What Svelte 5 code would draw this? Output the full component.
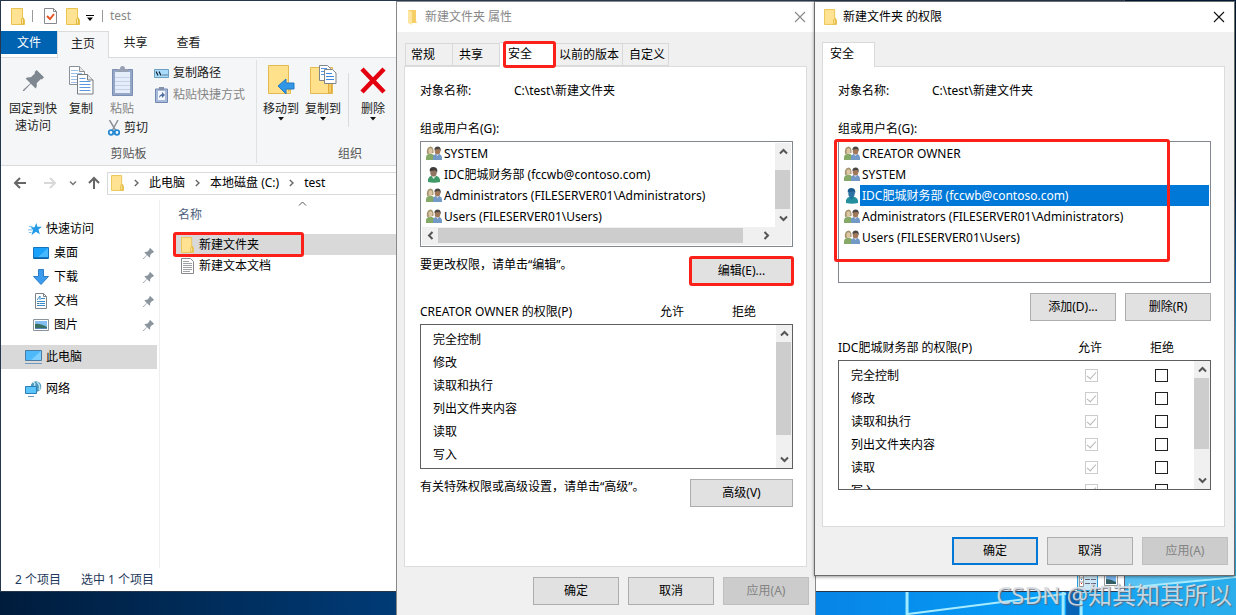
<script>
  const tabs = ['常规', '共享', '安全', '以前的版本', '自定义'];
  const quick = [
    { name: '桌面', icon: 'desktop' },
    { name: '下载', icon: 'download' },
    { name: '文档', icon: 'document' },
    { name: '图片', icon: 'picture' }
  ];
  const principals = [
    { name: 'SYSTEM', kind: 'group' },
    { name: 'IDC肥城财务部 (fccwb@contoso.com)', kind: 'user' },
    { name: 'Administrators (FILESERVER01\\Administrators)', kind: 'group' },
    { name: 'Users (FILESERVER01\\Users)', kind: 'group' }
  ];
  const allPrincipals = [{ name: 'CREATOR OWNER', kind: 'group' }, ...principals];
  const rights = ['完全控制', '修改', '读取和执行', '列出文件夹内容', '读取', '写入'];
</script>

{#snippet folder(w, h)}
  <svg width={w} height={h} viewBox="0 0 14 17" aria-hidden="true">
    <path d="M.5.5h11v11.5l2-.5v5H.5z" fill="#ffe392" stroke="#e9c350" />
    <path d="M10.500 16V11l2-1v6z" fill="#ffe9a8" stroke="#e3b93f" />
  </svg>
{/snippet}

{#snippet smallFolder()}
  <svg width="13" height="16" viewBox="0 0 13 16" aria-hidden="true">
    <path d="M2 1h8v11l1 2H5z" fill="#f6cf68" />
    <path d="M2 1l4 2v13l-4-2z" fill="#ffe6a0" />
  </svg>
{/snippet}

{#snippet pin(size, rough)}
  <svg width={size} height={size} viewBox="0 0 20 20" aria-hidden="true">
    <path d="M13 0l7 7-2 2-1-.5-4 4c.5 2 0 4-1 5L7.500 13 1 20H0v-1l7-6.500L2.500 8c1.500-1 3-1.500 5-1l4-4-.5-1z" fill={rough} />
  </svg>
{/snippet}

{#snippet pages()}
  <svg width="25" height="29" viewBox="0 0 25 29" aria-hidden="true">
    <path d="M.5.5h10l5 5v13H.5z" fill="#fff" stroke="#8b9096" />
    <path d="M10.500 .5v5h5" fill="#e8e8e8" stroke="#8b9096" />
    <path d="M2 4.500h7M2 7.500h11M2 10.500h11M2 13.500h11M2 16.500h11" stroke="#9cc0ea" />
    <path d="M8.500 8.500h10l5.500 5.500v14H8.500z" fill="#fff" stroke="#777c82" />
    <path d="M18.500 8.500v5.500h5.500" fill="#e8e8e8" stroke="#777c82" />
    <path d="M10.500 12.500h6M10.500 15.500h11M10.500 18.500h11M10.500 21.500h11M10.500 24.500h11" stroke="#5c98e0" />
  </svg>
{/snippet}

{#snippet chevron(dir, color = '#555')}
  <svg class={dir} width="9" height="7" viewBox="0 0 9 7" aria-hidden="true">
    <path d="M1 5.500l3.500-3.500L8 5.500" fill="none" stroke={color} stroke-width={dir === 'thin' ? 1 : 2} />
  </svg>
{/snippet}

{#snippet crumb()}
  <svg width="5" height="8" viewBox="0 0 5 8" aria-hidden="true">
    <path d="M.8 1L4 4 .8 7" fill="none" stroke="#666" stroke-width="1.400" />
  </svg>
{/snippet}

{#snippet drop()}
  <svg width="6" height="4" viewBox="0 0 6 4" aria-hidden="true"><path d="M0 0h6L3 3.500z" fill="#111" /></svg>
{/snippet}

{#snippet person(kind, selected)}
  {#if kind === 'group'}
    <svg width="16" height="15" viewBox="0 0 16 15" aria-hidden="true">
      <path d="M0 14V11q0-2 2.500-3h3.500Q9 9 9 11v3z" fill="#86a968" />
      <path d="M1 8Q0 1 4.500.5 8 1 7.500 7z" fill="#a4946c" />
      <ellipse cx="4.500" cy="5" rx="2" ry="2.800" fill="#dcc6a4" />
      <path d="M7 14V11q0-2 2.500-3h4Q16 9 16 11.500V14z" fill="#7399c6" />
      <path d="M10 8l1.500 2L13 8z" fill="#eef" />
      <ellipse cx="11.500" cy="5" rx="2.800" ry="3.500" fill="#a0785a" />
      <path d="M8.500 4Q8 .5 12 .5q3.500.5 2.500 5l-1-2.500q-3 0-5 1z" fill="#4a4644" />
    </svg>
  {:else}
    <svg width="16" height="16" viewBox="0 0 16 16" aria-hidden="true">
      <path d="M2 15v-3q1-3 4-3.500h3q4 .5 5 4V15q-6 1.500-12 0z" fill={selected ? '#24909e' : '#3f9967'} />
      <path d="M5.500 9l2 3L10 9z" fill={selected ? '#177a9e' : '#e8efe4'} />
      <ellipse cx="7.500" cy="5.500" rx="3.200" ry="4" fill={selected ? '#2c72a3' : '#8f7460'} />
      <path d="M3.800 4.500Q3 0 7.500 0q5 .3 3.500 6L10 3.500Q6 3 3.800 4.500z" fill={selected ? '#1b5b8d' : '#3f3b3a'} />
    </svg>
  {/if}
{/snippet}

{#snippet vscroll(grow, rest)}
  <div class="vscroll">
    <span class="cap">{@render chevron('up')}</span>
    <span class="thumb" style="flex-grow:{grow}"></span>
    <span style="flex-grow:{rest}"></span>
    <span class="cap">{@render chevron('down')}</span>
  </div>
{/snippet}

{#snippet titlebar(text, muted)}
  <header class="title" class:muted>
    {#if muted}{@render smallFolder()}{:else}{@render folder(13, 16)}{/if}
    <h2>{text}</h2>
    <button class="close" aria-label="关闭">
      <svg width="12" height="12" viewBox="0 0 12 12"><path d="M1 1l10 10M11 1L1 11" fill="none" stroke={muted ? '#888' : '#111'} stroke-width="1.100" /></svg>
    </button>
  </header>
{/snippet}

{#snippet objectName()}
  <dl class="object"><dt>对象名称:</dt><dd>C:\test\新建文件夹</dd></dl>
  <h3>组或用户名(G):</h3>
{/snippet}

{#snippet permHead(text)}
  <div class="permhead"><span>{text}</span><span>允许</span><span>拒绝</span></div>
{/snippet}

<main class="desktop">
  <div class="edge"></div>
  <svg class="wallpaper" viewBox="0 0 420 40" preserveAspectRatio="none" aria-hidden="true">
    <defs>
      <linearGradient id="sky"><stop offset="0" stop-color="#0784e6" /><stop offset=".55" stop-color="#079ff8" /><stop offset="1" stop-color="#2caeeb" /></linearGradient>
    </defs>
    <rect width="420" height="40" fill="url(#sky)" />
    <path d="M310 0h110L280 18z" fill="#7bd0f5" opacity=".65" />
    <path d="M92 39L248 19l172-17" fill="none" stroke="#a9ecff" stroke-width="2" />
    <path d="M91 12v28M247 12v28M265 15v25" stroke="#9eeaff" stroke-width="3" />
    <path d="M250 14h13v26h-13z" fill="#0864b7" />
  </svg>

  <section class="explorer" aria-label="test">
    <header class="quickbar">
      {@render folder(14, 17)}
      <i></i>
      <svg class="check" width="13" height="16" viewBox="0 0 13 16" aria-hidden="true"><path d="M.5.5h9l3 3v12H.5z" fill="#fff" stroke="#85898e" /><path d="M9.500.5v3h3" fill="none" stroke="#85898e" /><path d="M3 8l3 3 4-5" fill="none" stroke="#e65425" stroke-width="2" /></svg>
      {@render folder(14, 17)}
      <svg class="more" width="8" height="6" viewBox="0 0 8 6" aria-hidden="true"><path d="M0 0h8v1H0zM1 2.500h6L4 6z" /></svg>
      <i></i>
      <span>test</span>
    </header>
    <nav class="ribbontabs">
      <button class="file">文件</button>
      <button class="on">主页</button>
      <button>共享</button>
      <button>查看</button>
    </nav>
    <div class="ribbon">
      <div class="group clipboard">
        <button class="tool pinbtn">{@render pin(21, '#7f8790')}<span>固定到快<br />速访问</span></button>
        <button class="tool copy">{@render pages()}<span>复制</span></button>
        <div class="pastecol">
          <button class="tool off">
            <svg width="21" height="30" viewBox="0 0 21 30" aria-hidden="true"><path d="M.5 3.500h20v26H.5z" fill="#96a6c6" stroke="#7a8db3" /><path d="M3 6h15v21H3z" fill="#e6edfa" /><path d="M3 11.500h15M3 15.500h15M3 19.500h15M3 23.500h15" stroke="#c6d2ea" /><path d="M5 6V3h3q0-3 2.500-3T13 3h3v3z" fill="#97a1b3" /></svg>
            <span>粘贴</span>
          </button>
          <button class="small cut">
            <svg width="12" height="16" viewBox="0 0 12 16" aria-hidden="true"><path d="M1.500 0L8 11M10 0L4 11" fill="none" stroke="#8c9298" stroke-width="1.500" /><circle cx="3" cy="12.500" r="2.300" fill="none" stroke="#2388d4" stroke-width="1.800" /><circle cx="9" cy="12.500" r="2.300" fill="none" stroke="#2388d4" stroke-width="1.800" /></svg>
            剪切
          </button>
        </div>
        <div class="pathcol">
          <button class="small">
            <svg width="15" height="9" viewBox="0 0 15 9" aria-hidden="true"><path d="M.5.5h14v8H.5z" fill="#a9dcfb" stroke="#6f9fc0" /><path d="M2 2.500l2 4M5 2.500l2 4" stroke="#123" stroke-width="1.200" /><path d="M8.500 6h1M10.500 6h1M12.500 6h1" stroke="#123" /></svg>
            复制路径
          </button>
          <button class="small off">
            <svg width="15" height="16" viewBox="0 0 15 16" aria-hidden="true"><path d="M1.500 2h12v13.500h-12z" fill="#a8b9d9" stroke="#7187b0" /><path d="M4 4h7v9H4z" fill="#f2f6fd" /><path d="M5 0h5v3H5z" fill="#8491a8" /><path d="M5 11q0-3 3-4V5l3 3-3 3V9q-2 0-3 2z" fill="#526d9f" /></svg>
            粘贴快捷方式
          </button>
        </div>
        <p>剪贴板</p>
      </div>
      <div class="group organize">
        <button class="tool">
          <svg width="27" height="31" viewBox="0 0 27 31" aria-hidden="true"><path d="M.5.5h20v26l2-3v5H.5z" fill="#ffe18b" stroke="#e4b951" /><path d="M26 18v6h-8v5l-8-8 8-7v4z" fill="#3397e8" stroke="#2478c2" /></svg>
          <span>移动到</span>{@render drop()}
        </button>
        <button class="tool">
          <svg width="27" height="31" viewBox="0 0 27 31" aria-hidden="true"><path d="M.5 2.500h22v26H.5z" fill="#ffe18b" stroke="#e4b951" /><path d="M18.500 28V19l3-2v11z" fill="#f3cc68" stroke="#e0ad3c" /><path d="M9.500.5h8l3 3v12h-11z" fill="#fff" stroke="#7f858b" /><path d="M11 3.500h6M11 6.500h6M11 9.500h6" stroke="#5698e3" /><path d="M14.500 4.500h8l3.500 3.500v10.500H14.500z" fill="#fff" stroke="#7f858b" /><path d="M16 8.500h6M16 11.500h8M16 14.500h8" stroke="#3f86e0" /></svg>
          <span>复制到</span>{@render drop()}
        </button>
        <i></i>
        <button class="tool">
          <svg width="26" height="31" viewBox="0 0 26 31" aria-hidden="true"><path d="M2 4l22 23M24 4L2 27" fill="none" stroke="#e3000f" stroke-width="4.500" /></svg>
          <span>删除</span>{@render drop()}
        </button>
        <p>组织</p>
      </div>
    </div>
    <div class="navrow">
      <svg width="88" height="16" viewBox="0 0 88 16" aria-hidden="true">
        <g fill="none" stroke-width="2"><path d="M13 8H2M7 3L2 8l5 5" stroke="#666" /><path d="M31 8h11M37 3l5 5-5 5" stroke="#d8d8d8" /><path d="M57 6.500l3 3 3-3" stroke="#777" stroke-width="1.500" /><path d="M81 14V3M76 8l5-5 5 5" stroke="#666" /></g>
      </svg>
      <div class="address">
        {@render folder(13, 16)}{@render crumb()}<a href="#pc">此电脑</a>{@render crumb()}<a href="#c">本地磁盘 (C:)</a>{@render crumb()}<a href="#test">test</a>
      </div>
    </div>
    <div class="body">
      <nav class="tree">
        <a class="root quick" href="#quick"><svg width="14" height="14" viewBox="0 0 16 14" aria-hidden="true"><path d="M9.500 0l1.300 4.300H16l-4 3.200 1.500 5.500-4.500-3-5 4 1.700-6L3 5h4.500z" fill="#239ae8" /><path d="M1 4h4M0 8h5M1 11h3" stroke="#5ab6ef" /></svg>快速访问</a>
        {#each quick as q}
          <a class="leaf" href="#{q.icon}">
            <svg width="16" height="16" viewBox="0 0 16 16" aria-hidden="true">
              {#if q.icon === 'desktop'}
                <path d="M.5 2.500h15v11H.5z" fill="#18a0fa" stroke="#1474bd" /><path d="M1 13h14" stroke="#064a83" /><path d="M15 3L5 12h10z" fill="#45b8ff" />
              {:else if q.icon === 'download'}
                <path d="M5.500.5h5v7h5L8 15.500.5 7.500h5z" fill="#3b9bec" stroke="#2d7ec8" />
              {:else if q.icon === 'document'}
                <path d="M2.500.5h8l3 3v12h-11z" fill="#fff" stroke="#7d848b" /><path d="M10.500.5v3h3" fill="none" stroke="#7d848b" /><path d="M4 7l3-4v4M8 5.500h4M4 8.500h8M7 10.500h5M4 12.500h8" fill="none" stroke="#3a8ac9" /><path d="M4 10h2.500v1H4z" fill="#478" />
              {:else}
                <path d="M.5 2.500h15v11H.5z" fill="#fff" stroke="#8d9499" /><path d="M2 4h12v8H2z" fill="#83bdf2" /><path d="M2 7q4-1 12 3v2H2z" fill="#397061" /><path d="M2 11h12v1H2z" fill="#5787ba" />
              {/if}
            </svg>
            <span>{q.name}</span>{@render pin(11, '#8b959d')}
          </a>
        {/each}
        <a class="root on" href="#pc"><svg width="17" height="16" viewBox="0 0 17 16" aria-hidden="true"><path d="M.5 1.500h16v10H.5z" fill="#4db9fa" stroke="#4c7ca3" /><path d="M16 2L6 11h10z" fill="#7ccfff" /><path d="M0 14.500h17" stroke="#6f98bd" /></svg>此电脑</a>
        <a class="root" href="#network"><svg width="17" height="16" viewBox="0 0 17 16" aria-hidden="true"><circle cx="11" cy="5.500" r="5.300" fill="#4f97bd" /><path d="M8 1q3 1 1 5M12 1q4 4 2 8" fill="none" stroke="#b9e3ef" stroke-width="1.500" /><path d="M.5 5.500h11v7H.5z" fill="#5ac4fc" stroke="#2f7db5" /><path d="M3 15.500h6" stroke="#6f98bd" /></svg>网络</a>
      </nav>
      <div class="files">
        <span class="sort">{@render chevron('thin', '#555')}</span>
        <h3>名称</h3>
        <ul>
          <li class="picked">{@render folder(13, 16)}新建文件夹<b class="mark"></b></li>
          <li><svg width="13" height="16" viewBox="0 0 13 16" aria-hidden="true"><path d="M.5.5h9l3 3v12H.5z" fill="#fff" stroke="#85898e" /><path d="M2 3.500h6M2 5.500h9M2 7.500h9M2 9.500h9M2 11.500h9M2 13.500h7" stroke="#9da2a6" /></svg>新建文本文档</li>
        </ul>
      </div>
    </div>
    <footer class="status">
      <span>2 个项目</span><span>选中 1 个项目</span>
      <button class="view lit" aria-label="详细信息"><svg width="17" height="14" viewBox="0 0 17 14"><path d="M.5.5h4v13h-4zM.5 5h4M.5 9h4" fill="#fff" stroke="#999" /><path d="M6 2.500h5M12 2.500h5M6 6.500h5M12 6.500h5M6 10.500h5M12 10.500h5" stroke="#667" /><path d="M2 6h1v1H2z" fill="#27d" /><path d="M2 10h1v1H2z" fill="#d22" /></svg></button>
      <button class="view" aria-label="大图标"><svg width="14" height="12" viewBox="0 0 14 12"><path d="M.5.5h13v11H.5z" fill="#fff" stroke="#999" /><path d="M2 2h10v8H2z" fill="#78b6f0" /><path d="M2 5q5 0 10 3v2H2z" fill="#355e62" /></svg></button>
    </footer>
  </section>

  <section class="dialog props" aria-label="新建文件夹 属性">
    {@render titlebar('新建文件夹 属性', true)}
    <div class="tabs">
      {#each tabs as t}
        <button class:on={t === '安全'}>{t}{#if t === '安全'}<b class="mark"></b>{/if}</button>
      {/each}
    </div>
    <div class="panel">
      {@render objectName()}
      <div class="list boxed">
        <div class="listrow">
          <ul>{#each principals as p}<li>{@render person(p.kind, false)}<span>{p.name}</span></li>{/each}</ul>
          {@render vscroll(41, 1)}
        </div>
        <div class="hscroll">
          <span class="cap">{@render chevron('left')}</span><span class="thumb"></span><span class="cap">{@render chevron('right')}</span>
        </div>
      </div>
      <div class="hint"><p>要更改权限，请单击“编辑”。</p><button class="btn wide">编辑(E)...<b class="mark"></b></button></div>
      {@render permHead('CREATOR OWNER 的权限(P)')}
      <div class="perms">
        <table><tbody>{#each rights as r}<tr><th scope="row">{r}</th></tr>{/each}</tbody></table>
        {@render vscroll(93, 16)}
      </div>
      <div class="hint"><p>有关特殊权限或高级设置，请单击“高级”。</p><button class="btn wide">高级(V)</button></div>
    </div>
    <footer class="actions"><button class="btn">确定</button><button class="btn">取消</button><button class="btn" disabled>应用(A)</button></footer>
  </section>

  <section class="dialog grants" aria-label="新建文件夹 的权限">
    {@render titlebar('新建文件夹 的权限', false)}
    <div class="tabs"><button class="on first">安全</button></div>
    <div class="panel">
      {@render objectName()}
      <div class="list tall">
        <ul>
          {#each allPrincipals as p}
            <li class:selected={p.kind === 'user'}>{@render person(p.kind, p.kind === 'user')}<span>{p.name}</span></li>
          {/each}
        </ul>
        <b class="mark"></b>
      </div>
      <div class="pair"><button class="btn">添加(D)...</button><button class="btn">删除(R)</button></div>
      {@render permHead('IDC肥城财务部 的权限(P)')}
      <div class="perms short">
        <table>
          <tbody>
            {#each rights as r}
              <tr><th scope="row">{r}</th><td><input type="checkbox" checked disabled aria-label="{r} 允许" /></td><td><input type="checkbox" aria-label="{r} 拒绝" /></td></tr>
            {/each}
          </tbody>
        </table>
        {@render vscroll(72, 24)}
      </div>
    </div>
    <footer class="actions"><button class="btn default">确定</button><button class="btn">取消</button><button class="btn" disabled>应用(A)</button></footer>
  </section>

  <p class="watermark">CSDN @知其知其所以</p>
</main>

<style>
  :global(body) { margin: 0; }
  * { box-sizing: border-box; }
  .desktop {
    position: relative; height: 100vh; overflow: hidden;
    display: grid; grid-template-columns: 396fr 418fr 421fr 1fr; align-items: start;
    background: linear-gradient(90deg, #001c3c, #003c78 33%, #00152f 34%, #001a38);
    font: 12px/16px "Noto Sans", "Noto Sans CJK SC", sans-serif; color: #000;
  }
  h2, h3, p, ul, dl, dd { margin: 0; padding: 0; font: inherit; }
  ul { list-style: none; }
  svg { flex: none; display: block; }
  a { color: inherit; text-decoration: none; }
  button { font: inherit; color: inherit; background: none; border: 0; padding: 0; }
  .edge { position: absolute; inset: 0 0 0 auto; width: 8px; background: linear-gradient(#001a38 30%, #0a6cc0 45%, #5cc4ee 60%, #2caeeb); }
  .wallpaper { position: absolute; right: 0; bottom: 0; width: 34%; height: 40px; }
  .mark { position: absolute; border: 3px solid #fb2118; border-radius: 3px; pointer-events: none; }

  .explorer {
    position: absolute; inset: 0 9% 23px 0; display: flex; flex-direction: column;
    background: #fff; border: 1px solid #26364d; border-right-color: #667;
  }
  .quickbar { display: flex; align-items: center; height: 30px; padding-left: 10px; color: #888; }
  .quickbar i { width: 1px; height: 12px; margin: 0 11px 0 7px; background: #999; }
  .quickbar .check { margin-right: 9px; }
  .quickbar .more { margin: 3px 3px 0 6px; }
  .quickbar .more + i { margin: 0 7px 0 5px; }
  .ribbontabs { display: flex; height: 27px; border-bottom: 1px solid #dadbdc; color: #222; }
  .ribbontabs button { width: 53px; height: 24px; }
  .ribbontabs .file { width: 56px; height: 23px; background: #0063b1; color: #fff; }
  .ribbontabs .on { width: 52px; height: 27px; padding-bottom: 3px; background: #f5f6f7; border: 1px solid #dadbdc; border-bottom: 0; }
  .ribbon { display: flex; height: 108px; background: #f5f6f7; border-bottom: 1px solid #dadbdc; color: #222; }
  .group { position: relative; display: flex; align-items: flex-start; margin: 2px 0; border-right: 1px solid #e0e1e3; }
  .group p { position: absolute; bottom: 1px; left: 0; right: 0; text-align: center; color: #555; }
  .clipboard { width: 256px; padding-top: 6px; }
  .organize { width: 187px; padding: 5px 0 0 3px; }
  .organize > i { width: 1px; height: 54px; margin: 8px 0 0 4px; background: #dadbdc; }
  .tool { display: flex; flex-direction: column; align-items: center; width: 42px; }
  .tool span { margin-top: 4px; line-height: 17px; }
  .tool.off, .small.off { color: #858585; }
  .organize .tool span { margin-top: 4px; }
  .organize i + .tool { width: 48px; }
  .pinbtn { width: 64px; padding-top: 4px; }
  .pinbtn span { margin-top: 9px; white-space: nowrap; }
  .copy { width: 32px; padding-top: 0; }
  .copy span { margin-top: 5px; }
  .pastecol { width: 54px; }
  .pastecol .tool { width: 50px; }
  .pathcol { margin: -4px 0 0 3px; }
  .small { display: flex; align-items: center; gap: 4px; height: 22px; white-space: nowrap; }
  .cut { margin-left: 11px; }
  .navrow { display: flex; align-items: center; height: 34px; padding-left: 12px; gap: 6px; }
  .address { flex: 1; display: flex; align-items: center; gap: 10px; height: 23px; padding-left: 3px; border: 1px solid #d9d9d9; }
  .body { flex: 1; display: flex; min-height: 0; }
  .tree { width: 159px; padding-top: 17px; border-right: 1px solid #eee; }
  .tree a { display: flex; align-items: center; height: 24px; margin-right: 2px; gap: 4px; }
  .tree .root { padding-left: 24px; margin-top: 8px; }
  .tree .quick { margin-top: 0; padding-left: 27px; }
  .tree .leaf { padding: 0 3px 0 32px; gap: 5px; }
  .tree .leaf span { flex: 1; }
  .tree .on { background: #d9d9d9; }
  .files { position: relative; flex: 1; padding: 7px 0 0 14px; }
  .files h3 { padding-left: 4px; color: #4c607a; }
  .sort { position: absolute; left: 138px; top: 0; }
  .files ul { padding-top: 11px; }
  .files li { position: relative; display: flex; align-items: center; gap: 5px; height: 21px; padding-left: 7px; }
  .files .picked { background: #d9d9d9; }
  .picked .mark { left: -1px; top: -2px; width: 131px; height: 25px; }
  .status { display: flex; align-items: center; height: 23px; padding-left: 14px; color: #1e395b; }
  .status span { margin-right: 20px; }
  .status span + span { flex: 1; margin: 0; }
  .view { display: flex; align-items: center; justify-content: center; width: 26px; height: 22px; }
  .lit { width: 21px; background: #cce8f8; border: 1px solid #26a0da; }

  .dialog { position: relative; margin-top: 1px; background: #f0f0f0; border: 1px solid #6b6b6b; }
  .props { grid-column: 2; margin-right: -2px; border-color: #888; height: 100vh; }
  .grants { grid-column: 3; box-shadow: 0 1px 3px #0006; }
  .title { display: flex; align-items: center; height: 30px; padding: 0 7px 0 9px; gap: 6px; background: #fff; }
  .title h2 { flex: 1; }
  .muted h2 { color: #888; }
  .close { width: 14px; }
  .tabs { display: flex; align-items: flex-end; padding: 9px 7px 0 8px; height: 34px; }
  .tabs button { height: 23px; padding: 0 3px 0 6px; border: 1px solid #d9d9d9; border-left-width: 0; background: #f0f0f0; white-space: nowrap; }
  .tabs button:nth-child(1) { border-left-width: 1px; padding: 0 17px 0 5px; }
  .tabs button:nth-child(2) { padding: 0 16px 0 6px; }
  .tabs button:nth-child(4) { padding: 0 3px; }
  .tabs button.on { position: relative; z-index: 1; height: 25px; padding: 0 23px 2px 8px; margin-bottom: -1px; background: #fff; border-bottom: 0; }
  .tabs button.first { margin-left: -1px; padding: 0 20px 2px 7px; border-left-width: 1px; }
  .tabs .mark { inset: -2px -1px -1px 3px; }
  .panel { margin: 0 8px 0 7px; padding: 16px 13px 0 15px; background: #fff; border: 1px solid #dcdcdc; height: 501px; }
  .grants .panel { margin-right: 9px; height: 461px; }
  .object { display: flex; }
  .object dt { width: 94px; }
  .panel h3 { margin-top: 22px; line-height: 16px; }
  .list { position: relative; margin-top: 4px; padding: 1px; border: 1px solid #828790; }
  .list.tall { height: 142px; }
  .listrow { display: flex; }
  .listrow ul { flex: 1; min-width: 0; }
  .list li { display: flex; align-items: center; height: 21px; padding-left: 4px; white-space: nowrap; }
  .list li span { line-height: 21px; padding-left: 2px; }
  .selected span { flex: 1; background: #0078d7; color: #fff; }
  .tall .mark { left: -5px; top: -3px; right: 40px; height: 123px; }
  .vscroll { display: flex; flex-direction: column; width: 16px; background: #f0f0f0; }
  .cap { flex: none; display: flex; align-items: center; justify-content: center; width: 16px; height: 17px; }
  .thumb { background: #cdcdcd; margin-right: 1px; }
  .listrow .thumb { margin-top: 10px; }
  .hscroll { display: flex; height: 18px; padding-right: 17px; background: #f0f0f0; }
  .hscroll .thumb { flex: 1; height: 15px; margin: 1px 15px 0 0; }
  :global(svg.down) { transform: rotate(180deg); }
  :global(svg.left) { transform: rotate(-90deg); }
  :global(svg.right) { transform: rotate(90deg); }
  .hint { display: flex; justify-content: space-between; margin-top: 10px; }
  .btn { position: relative; width: 86px; height: 28px; background: #e1e1e1; border: 1px solid #adadad; }
  .btn.wide { width: 103px; }
  .btn:disabled { background: #ccc; border-color: #bfbfbf; color: #838383; }
  .btn.default { border: 2px solid #0078d7; }
  .btn .mark { inset: -2px; }
  .permhead { display: grid; grid-template-columns: 1fr 72px 61px; margin-top: 19px; }
  .perms { display: flex; height: 145px; margin-top: 4px; overflow: hidden; border: 1px solid #5f5f5f; }
  .perms.short { height: 130px; }
  table { flex: 1; align-self: flex-start; margin-top: 3px; border-collapse: collapse; }
  tr { height: 23px; }
  th { padding: 0 0 0 12px; font-weight: 400; text-align: left; }
  td { width: 70px; padding: 0; }
  input { appearance: none; display: block; width: 13px; height: 13px; margin: 0 0 0 31px; border: 1px solid #222; background: #fff; }
  input:disabled { border-color: #ccc; }
  input:checked::before { content: ""; display: block; width: 8px; height: 4px; margin: 2px 0 0 1px; border: solid #b5b5b5; border-width: 0 0 1px 1px; transform: rotate(-48deg); }
  .pair { display: flex; justify-content: flex-end; gap: 9px; margin-top: 10px; }
  .actions { display: flex; justify-content: flex-end; gap: 9px; padding: 10px 6px 10px; }
  .watermark { position: absolute; right: 4px; bottom: 2px; font-size: 24px; line-height: 36px; color: #d5dde3; text-shadow: 1px 1px 1px #667; opacity: .9; white-space: nowrap; }
</style>
